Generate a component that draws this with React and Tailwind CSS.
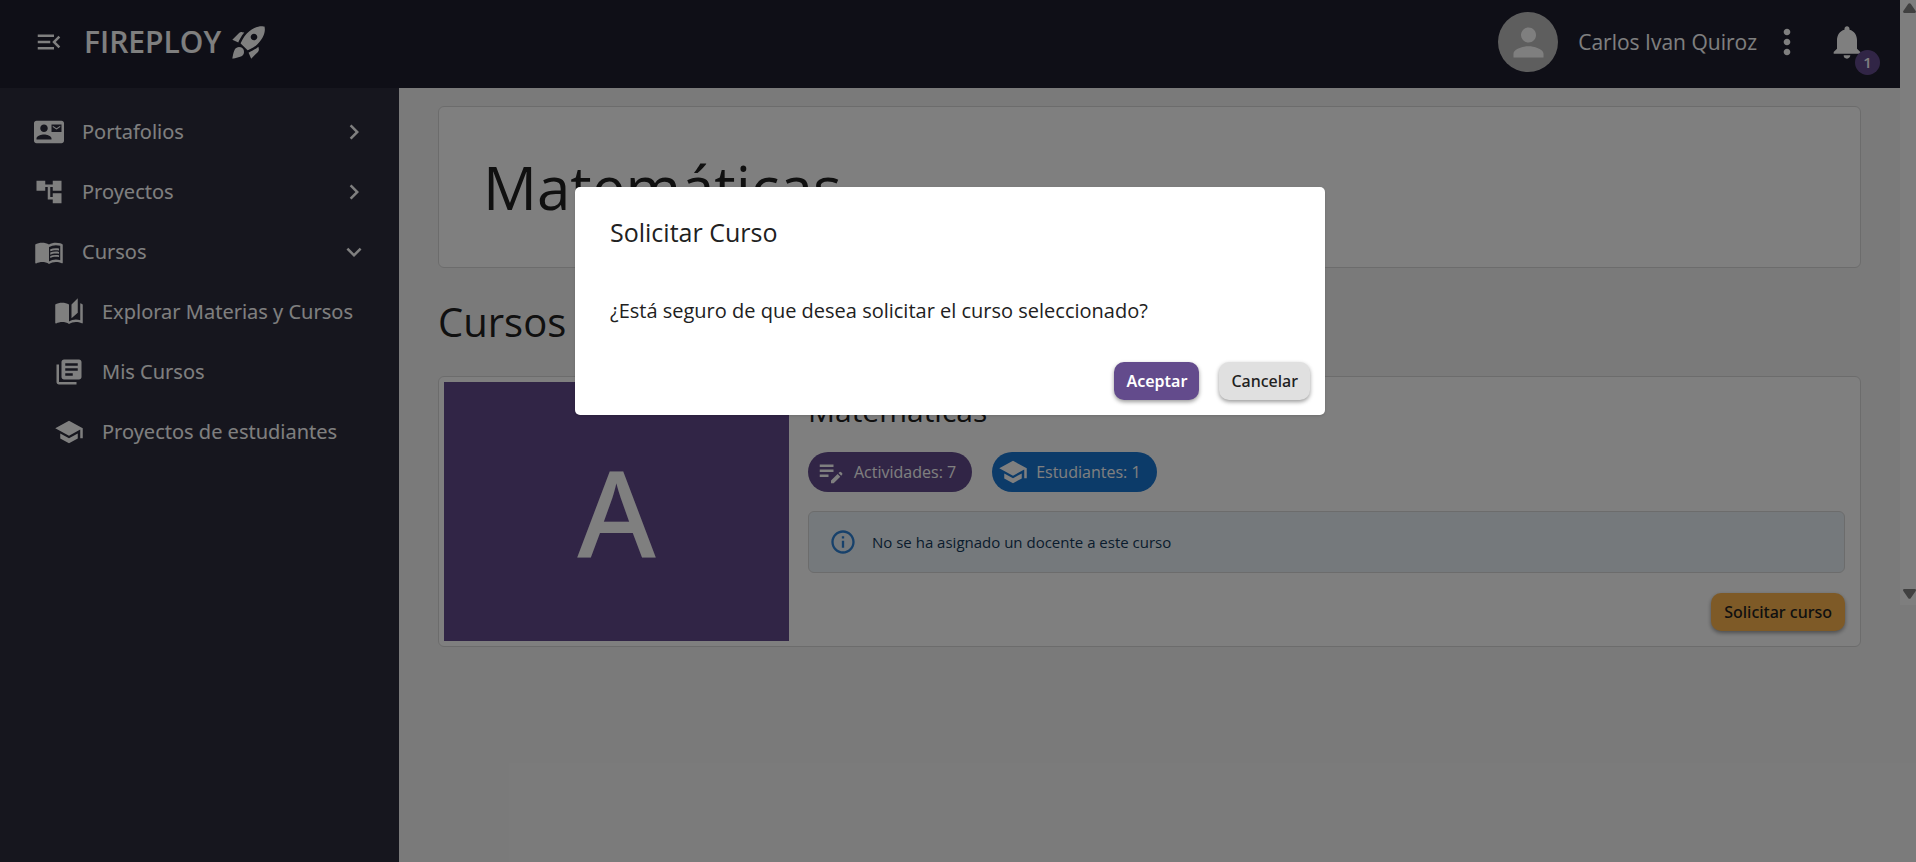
import {
  MdMenuOpen,
  MdRocketLaunch,
  MdContactMail,
  MdAccountTree,
  MdMenuBook,
  MdAutoStories,
  MdLibraryBooks,
  MdSchool,
  MdPerson,
  MdMoreVert,
  MdNotifications,
  MdNavigateNext,
  MdExpandMore,
  MdInfoOutline,
  MdEditNote,
} from "react-icons/md";

const navItems = [
  { label: "Portafolios", Icon: MdContactMail, Arrow: MdNavigateNext },
  { label: "Proyectos", Icon: MdAccountTree, Arrow: MdNavigateNext },
  { label: "Cursos", Icon: MdMenuBook, Arrow: MdExpandMore, open: true },
];

const courseLinks = [
  { label: "Explorar Materias y Cursos", Icon: MdAutoStories },
  { label: "Mis Cursos", Icon: MdLibraryBooks },
  { label: "Proyectos de estudiantes", Icon: MdSchool },
];

function Header() {
  return (
    <header className="flex h-22 items-center bg-[#1e1e2e] pr-[33px] pb-1 pl-[34px] text-white">
      <button type="button" aria-label="Contraer menú">
        <MdMenuOpen className="size-[30px]" />
      </button>
      <a href="#inicio" className="ml-5 flex items-center gap-2 text-[30px] leading-10 font-semibold">
        FIREPLOY
        <MdRocketLaunch className="size-10" />
      </a>
      <div className="ml-auto flex items-center">
        <span className="flex size-15 items-center justify-center rounded-full bg-[#bdbdbd]">
          <MdPerson className="size-[45px]" />
        </span>
        <span className="ml-5 text-[21px] leading-8">Carlos Ivan Quiroz</span>
        <button type="button" aria-label="Más opciones" className="ml-2.5">
          <MdMoreVert className="size-10" />
        </button>
        <button type="button" aria-label="Notificaciones" className="relative ml-5">
          <MdNotifications className="size-10" />
          <span className="absolute top-7 left-7 flex size-[25px] items-center justify-center rounded-full bg-[#634b8c] text-[15px] leading-none font-semibold">
            1
          </span>
        </button>
      </div>
    </header>
  );
}

function Sidebar() {
  return (
    <nav className="w-[399px] shrink-0 bg-[#2c2c3c] pt-3.5 font-['Noto_Sans','Open_Sans',sans-serif] text-xl text-white">
      <ul>
        {navItems.map(({ label, Icon, Arrow, open }) => (
          <li key={label}>
            <button type="button" aria-expanded={!!open} className="flex h-15 w-full items-center pr-[30px] pl-[34px]">
              <Icon className="size-[30px]" />
              <span className="ml-[18px]">{label}</span>
              <Arrow className="ml-auto size-[30px]" />
            </button>
          </li>
        ))}
        {courseLinks.map(({ label, Icon }) => (
          <li key={label}>
            <a href="#cursos" className="flex h-15 items-center pl-[54px]">
              <Icon className="size-[30px]" />
              <span className="ml-[18px]">{label}</span>
            </a>
          </li>
        ))}
      </ul>
    </nav>
  );
}

function CourseCard() {
  return (
    <article className="flex rounded-md border border-[#d8d8d8] bg-white p-[5px]">
      <div className="flex h-[259px] w-[345px] shrink-0 items-center justify-center bg-[#634b8c] font-['Noto_Sans',sans-serif] text-[120px] leading-none font-medium text-white">
        A
      </div>
      <div className="flex grow flex-col pt-2 pr-2.5 pl-[19px]">
        <h3 className="text-3xl leading-[42px]">Matemáticas</h3>
        <div className="mt-5 flex gap-5 text-base text-white">
          <span className="flex h-10 items-center gap-2 rounded-full bg-[#634b8c] pr-4 pl-2">
            <MdEditNote className="size-[30px]" />
            Actividades: 7
          </span>
          <span className="flex h-10 items-center gap-2 rounded-full bg-[#1976d2] pr-4 pl-1.5">
            <MdSchool className="size-[30px]" />
            Estudiantes: 1
          </span>
        </div>
        <div role="status" className="mt-[19px] flex h-[62px] items-center rounded-md border border-[#d8d8d8] bg-[#ebf3f9] pl-5 text-[#14395a]">
          <MdInfoOutline className="size-7 text-[#2f82d6]" />
          <span className="ml-[15px] text-[15px]">No se ha asignado un docente a este curso</span>
        </div>
        <button
          type="button"
          className="mt-5 h-[38px] self-end rounded-[10px] bg-[#fdb54e] px-[13px] font-['Noto_Sans',sans-serif] text-base font-medium shadow-[0_2px_4px_rgba(0,0,0,0.4)]"
        >
          Solicitar curso
        </button>
      </div>
    </article>
  );
}

function Dialog() {
  return (
    <div className="absolute inset-0 flex items-start justify-center bg-black/50 px-4 pt-[187px]">
      <div
        role="dialog"
        aria-modal="true"
        aria-labelledby="dialog-title"
        className="mr-4 w-full max-w-[750px] rounded-[5px] bg-white text-[#212121] shadow-sm"
      >
        <h2 id="dialog-title" className="px-[35px] pt-[27px] text-[25px] leading-9">
          Solicitar Curso
        </h2>
        <p className="mt-[45px] px-[35px] text-xl leading-8">
          ¿Está seguro de que desea solicitar el curso seleccionado?
        </p>
        <div className="mt-[35px] flex justify-end gap-5 pr-[15px] pb-[15px] font-['Noto_Sans',sans-serif] text-base">
          <button
            type="button"
            className="h-[38px] rounded-[10px] bg-[#634b8c] px-3 font-semibold text-white shadow-[0_2px_4px_rgba(0,0,0,0.4)]"
          >
            Aceptar
          </button>
          <button
            type="button"
            className="h-[38px] rounded-[10px] bg-[#e0e0e0] px-3 font-medium shadow-[0_2px_4px_rgba(0,0,0,0.4)]"
          >
            Cancelar
          </button>
        </div>
      </div>
    </div>
  );
}

function ScrollTrack() {
  return (
    <div aria-hidden="true" className="flex h-[605px] w-4 shrink-0 flex-col items-end justify-between bg-[#fcfcfc] pt-[3px] pb-1.5 text-[#808080]">
      <svg viewBox="0 0 13 10" className="h-2.5 w-[13px]" fill="currentColor">
        <path d="M5.3.8 0.3 8c-.6 1 0 2 1 2h10.4c1 0 1.6-1 1-2L7.7.8C7.1 0 5.9 0 5.3.8Z" />
      </svg>
      <svg viewBox="0 0 13 10" className="h-2.5 w-[13px]" fill="currentColor">
        <path d="M5.3 9.2.3 2c-.6-1 0-2 1-2h10.4c1 0 1.6 1 1 2L7.7 9.2c-.6.8-1.8.8-2.4 0Z" />
      </svg>
    </div>
  );
}

export default function App() {
  return (
    <div className="relative flex min-h-screen bg-[#f5f5f5] font-['Open_Sans','Noto_Sans',sans-serif] text-[#212121]">
      <div className="flex grow flex-col">
        <Header />
        <div className="flex grow">
          <Sidebar />
          <main className="grow px-[39px] pt-[18px]">
            <section className="rounded-md border border-[#d8d8d8] bg-white px-11 py-10">
              <h1 className="text-6xl leading-[80px]">Matemáticas</h1>
            </section>
            <h2 className="my-6 text-[40px] leading-[60px]">Cursos</h2>
            <CourseCard />
          </main>
        </div>
      </div>
      <ScrollTrack />
      <Dialog />
    </div>
  );
}
